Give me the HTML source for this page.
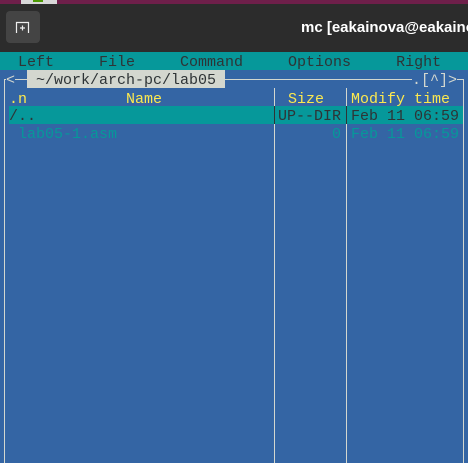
<!DOCTYPE html>
<html><head><meta charset="utf-8"><style>
body{margin:0;width:468px;height:463px;overflow:hidden;background:#3465a4;position:relative;font-family:"Liberation Mono",monospace;font-size:15px}
.a{position:absolute;white-space:pre;line-height:18px;overflow:hidden}
.t{padding-top:2px;line-height:18px}
</style></head><body>
<div class="a" style="left:0;top:0;width:468px;height:4px;background:#6e1f4a"></div>
<div class="a" style="left:21px;top:0;width:36px;height:4px;background:#d8d8d8"></div>
<div class="a" style="left:33px;top:0;width:10px;height:2px;background:#4e9a06"></div>
<div class="a" style="left:0;top:4px;width:468px;height:48px;background:#2c2c2c"></div>
<div class="a" style="left:6px;top:11px;width:34px;height:32px;background:#444;border-radius:4px"></div>
<svg class="a" style="left:14px;top:20px" width="18" height="14" viewBox="0 0 18 14"><path d="M2.5 13V2.5h12V13" fill="none" stroke="#eee" stroke-width="1.2"/><path d="M8.5 5.5v5M6 8h5" stroke="#eee" stroke-width="1.2"/></svg>
<div class="a" style="left:301px;top:19px;width:167px;color:#fff;font-family:'Liberation Sans',sans-serif;font-weight:bold;font-size:15px">mc [eakainova@eakainova</div>
<div class="a t" style="left:0;top:52px;width:468px;height:16px;background:#06989a;color:#2e3436">  Left     File     Command     Options     Right</div>
<div class="a" style="left:4px;top:79px;width:460px;height:1px;background:#d3d7cf"></div>
<div class="a" style="left:4px;top:79px;width:1px;height:384px;background:#d3d7cf"></div>
<div class="a" style="left:463px;top:79px;width:1px;height:384px;background:#d3d7cf"></div>
<div class="a" style="left:274px;top:88px;width:1px;height:375px;background:#d3d7cf"></div>
<div class="a" style="left:346px;top:88px;width:1px;height:375px;background:#d3d7cf"></div>
<div class="a t" style="left:6px;top:70px;color:#d3d7cf;background:#3465a4">&lt;</div>
<div class="a t" style="left:27px;top:70px;width:198px;height:16px;background:#d3d7cf;color:#2e3436"> ~/work/arch-pc/lab05 </div>
<div class="a t" style="left:412px;top:70px;color:#d3d7cf;background:#3465a4">.[^]&gt;</div>
<div class="a t" style="left:9px;top:89px;color:#fce94f">.n</div>
<div class="a t" style="left:126px;top:89px;color:#fce94f">Name</div>
<div class="a t" style="left:288px;top:89px;color:#fce94f">Size</div>
<div class="a t" style="left:351px;top:89px;color:#fce94f">Modify time</div>
<div class="a" style="left:9px;top:106px;width:454px;height:18px;background:#06989a"></div>
<div class="a" style="left:274px;top:106px;width:1px;height:18px;background:#2e3436"></div>
<div class="a" style="left:346px;top:106px;width:1px;height:18px;background:#2e3436"></div>
<div class="a t" style="left:9px;top:106px;color:#2e3436">/..</div>
<div class="a t" style="left:278px;top:106px;color:#2e3436">UP--DIR</div>
<div class="a t" style="left:351px;top:106px;color:#2e3436">Feb 11 06:59</div>
<div class="a t" style="left:18px;top:124px;color:#06989a">lab05-1.asm</div>
<div class="a t" style="left:332px;top:124px;color:#06989a">0</div>
<div class="a t" style="left:351px;top:124px;color:#06989a">Feb 11 06:59</div>
</body></html>
